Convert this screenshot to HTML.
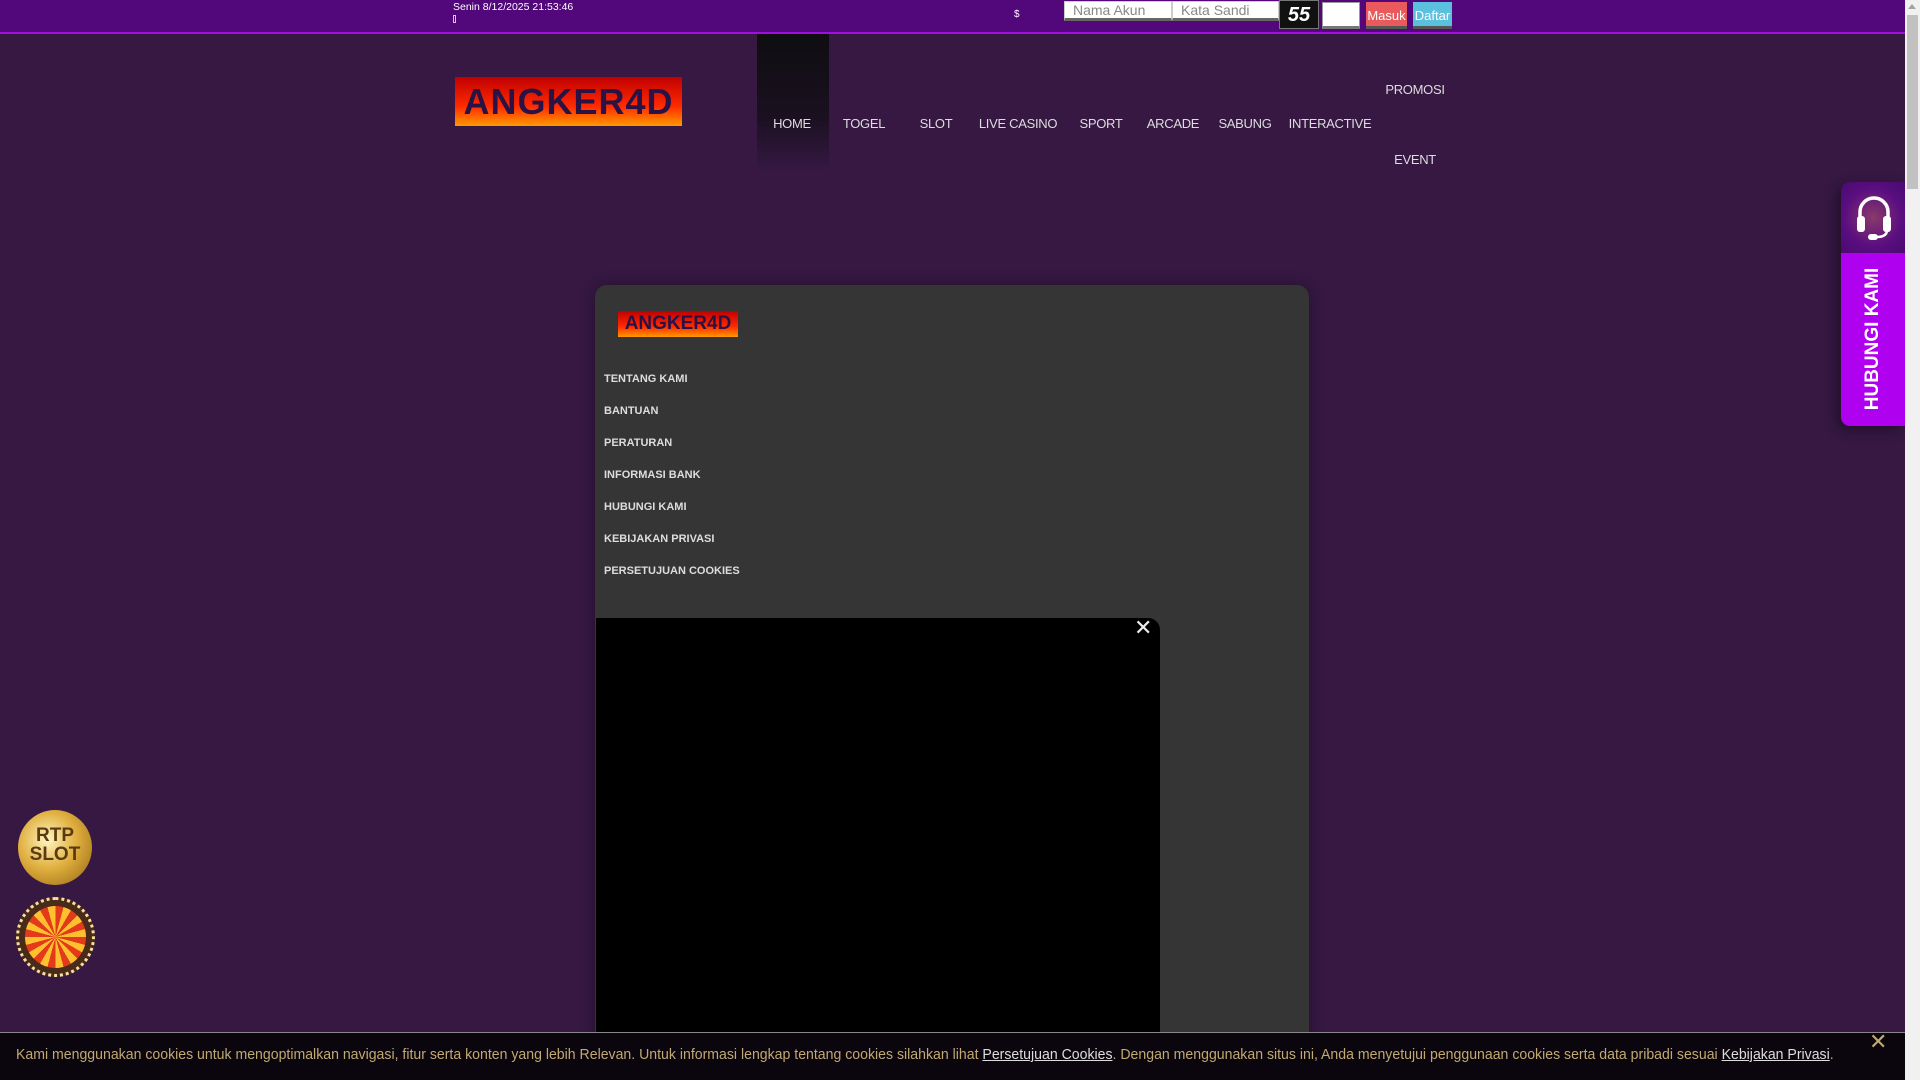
<!DOCTYPE html>
<html style="overflow:hidden;height:1080px"><head><meta charset="utf-8">
<style>
*{margin:0;padding:0;box-sizing:border-box}
body{width:1920px;height:1080px;overflow:hidden;background:#361843;font-family:"Liberation Sans",sans-serif;position:relative}
.abs{position:absolute}
#top{left:0;top:0;width:1905px;background:#52077a;border-bottom:2px solid #a10ee0;height:34px}
.date{left:453px;top:1px;color:#fff;font-size:10.5px}
.inp{background:#fff;border:1px solid #ccc;border-bottom:3px solid #666;color:#888;font-size:14px;padding-left:8px;line-height:16px;height:20px;top:1px}
.btn{top:2px;height:27px;color:#fff;font-size:13px;text-align:center;line-height:27px;border-bottom:3px solid #555}
.nav{top:116px;color:#ddd;font-size:13px;width:90px;text-align:center;letter-spacing:-.3px}
.logo{background:linear-gradient(#c00000,#ff2a00 60%,#ff9a00);color:#2a1245;font-weight:bold;text-align:center;overflow:hidden;white-space:nowrap}
.menu{left:604px;color:#ddd;font-size:11px;font-weight:bold}
</style></head><body>
<div id="top" class="abs"></div>
<div class="abs date">Senin 8/12/2025 21:53:46</div>
<div class="abs" style="left:453px;top:15px;width:3px;height:8px;border:1px solid #ccc"></div>
<div class="abs" style="left:1014px;top:9px;color:#fff;font-size:10px">$</div>
<div class="abs inp" style="left:1064px;width:108px">Nama Akun</div>
<div class="abs inp" style="left:1172px;width:107px">Kata Sandi</div>
<div class="abs" style="left:1279px;top:0;width:40px;height:29px;background:#111;border:1px solid #777;color:#fff;font:italic bold 20px 'Liberation Sans';text-align:center;line-height:28px">55</div>
<div class="abs" style="left:1322px;top:2px;width:38px;height:27px;background:#fff;border:1px solid #999;border-bottom:3px solid #777"></div>
<div class="abs btn" style="left:1366px;width:41px;background:#e85a5c">Masuk</div>
<div class="abs btn" style="left:1413px;width:39px;background:#5bc0de">Daftar</div>

<div class="abs" style="left:757px;top:34px;width:72px;height:138px;background:linear-gradient(#0e0e10,#1a1020 60%,rgba(54,24,67,0))"></div>
<div class="abs logo" style="left:455px;top:77px;width:227px;height:49px;font-size:36px;line-height:49px;letter-spacing:1px">ANGKER4D</div>
<div class="abs nav" style="left:747px">HOME</div>
<div class="abs nav" style="left:819px">TOGEL</div>
<div class="abs nav" style="left:891px">SLOT</div>
<div class="abs nav" style="left:973px">LIVE CASINO</div>
<div class="abs nav" style="left:1056px">SPORT</div>
<div class="abs nav" style="left:1128px">ARCADE</div>
<div class="abs nav" style="left:1200px">SABUNG</div>
<div class="abs nav" style="left:1285px">INTERACTIVE</div>
<div class="abs nav" style="left:1370px;top:82px">PROMOSI</div>
<div class="abs nav" style="left:1370px;top:152px">EVENT</div>

<div class="abs" style="left:595px;top:285px;width:714px;height:795px;background:#353535;border-radius:12px 12px 0 0;box-shadow:0 0 14px rgba(0,0,0,.35)"></div>
<div class="abs logo" style="left:618px;top:311px;width:120px;height:26px;font-size:19px;line-height:26px">ANGKER4D</div>
<div class="abs menu" style="top:373px">TENTANG KAMI</div>
<div class="abs menu" style="top:405px">BANTUAN</div>
<div class="abs menu" style="top:437px">PERATURAN</div>
<div class="abs menu" style="top:469px">INFORMASI BANK</div>
<div class="abs menu" style="top:501px">HUBUNGI KAMI</div>
<div class="abs menu" style="top:533px">KEBIJAKAN PRIVASI</div>
<div class="abs menu" style="top:565px">PERSETUJUAN COOKIES</div>
<div class="abs" style="left:596px;top:618px;width:564px;height:462px;background:#000;border-top-right-radius:12px"></div>
<div class="abs" style="left:1134px;top:615px;color:#eee;font-size:22px">✕</div>

<div class="abs" style="left:1841px;top:182px;width:64px;height:244px;border-radius:9px 0 0 9px;overflow:hidden;box-shadow:-4px 4px 12px rgba(0,0,0,.4)">
 <div style="height:71px;background:radial-gradient(circle at 50% 50%,#8a3a6a,#5a0e80 60%,#4a0a70)"></div>
 <div style="height:173px;background:#b000f0"></div>
</div>
<svg class="abs" style="left:1855px;top:193px" width="38" height="50" viewBox="0 0 38 50" fill="none" stroke="#fff">
 <path d="M5 26 V19 A14 14 0 0 1 33 19 V26" stroke-width="3.5"/>
 <rect x="2" y="23" width="8" height="16" rx="3" fill="#fff" stroke="none"/>
 <rect x="28" y="23" width="8" height="16" rx="3" fill="#fff" stroke="none"/>
 <path d="M32 38 Q31 44 22 44" stroke-width="2.5"/>
 <rect x="13" y="41" width="10" height="6" rx="3" fill="#fff" stroke="none"/>
</svg>
<div class="abs" style="left:1790px;top:328px;width:166px;text-align:center;transform:rotate(-90deg);color:#fff;font-weight:bold;font-size:19px;white-space:nowrap">HUBUNGI KAMI</div>

<div class="abs" style="left:18px;top:810px;width:74px;height:75px;border-radius:50%;background:radial-gradient(circle at 40% 40%,#fff5c0,#e0b040 45%,#a07018 90%)"></div>
<div class="abs" style="left:26px;top:826px;width:58px;text-align:center;font:bold 19px/19px 'Liberation Sans';color:#5a3a10">RTP<br>SLOT</div>
<div class="abs" style="left:16px;top:897px;width:79px;height:80px;border-radius:50%;background:#4a2a18;border:3px dotted #f5e0a0"></div>
<div class="abs" style="left:25px;top:906px;width:61px;height:62px;border-radius:50%;background:repeating-conic-gradient(#e23a1a 0 15deg,#ffc030 15deg 30deg)"></div>

<div class="abs" style="left:0;top:1032px;width:1905px;height:48px;background:#0b050d;border-top:1px solid #888"></div>
<div class="abs" style="left:16px;top:1046px;color:#c0aa72;font-size:15px;white-space:nowrap;transform:scaleX(0.94);transform-origin:0 0">Kami menggunakan cookies untuk mengoptimalkan navigasi, fitur serta konten yang lebih Relevan. Untuk informasi lengkap tentang cookies silahkan lihat <u style="color:#ddd">Persetujuan Cookies</u>. Dengan menggunakan situs ini, Anda menyetujui penggunaan cookies serta data pribadi sesuai <u style="color:#ddd">Kebijakan Privasi</u>.</div>
<div class="abs" style="left:1869px;top:1029px;color:#c0aa72;font-size:22px">✕</div>

<div class="abs" style="left:1905px;top:0;width:15px;height:1080px;background:#f1f1f1"></div>
<div class="abs" style="left:1907px;top:15px;width:11px;height:174px;background:#c1c1c1"></div>
<div class="abs" style="left:1908px;top:4px;width:0;height:0;border:4px solid transparent;border-bottom:5px solid #a3a3a3;border-top:0"></div>
</body></html>
